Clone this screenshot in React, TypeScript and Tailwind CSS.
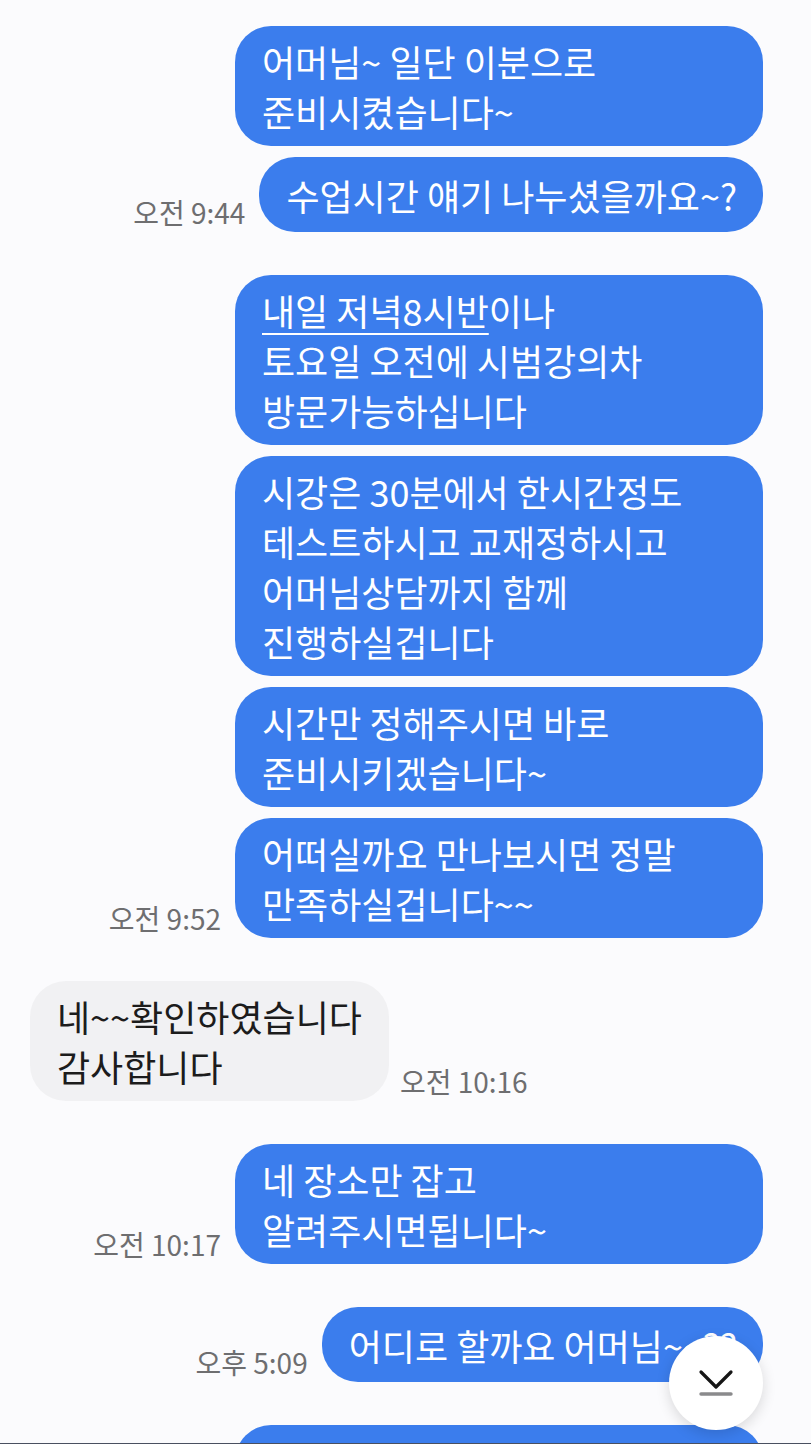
import React from "react";

type Msg = {
  lines: React.ReactNode[];
  wide?: boolean;
};

type Group = {
  from: "me" | "them";
  time: string;
  msgs: Msg[];
};

const groups: Group[] = [
  {
    from: "me",
    time: "오전 9:44",
    msgs: [
      { lines: ["어머님~ 일단 이분으로", "준비시켰습니다~"], wide: true },
      { lines: ["수업시간 얘기 나누셨을까요~?"] },
    ],
  },
  {
    from: "me",
    time: "오전 9:52",
    msgs: [
      {
        lines: [
          <>
            <span className="underline decoration-[2px] underline-offset-[7px]">내일 저녁8시반</span>이나
          </>,
          "토요일 오전에 시범강의차",
          "방문가능하십니다",
        ],
        wide: true,
      },
      {
        lines: ["시강은 30분에서 한시간정도", "테스트하시고 교재정하시고", "어머님상담까지 함께", "진행하실겁니다"],
        wide: true,
      },
      { lines: ["시간만 정해주시면 바로", "준비시키겠습니다~"], wide: true },
      { lines: ["어떠실까요 만나보시면 정말", "만족하실겁니다~~"], wide: true },
    ],
  },
  {
    from: "them",
    time: "오전 10:16",
    msgs: [{ lines: ["네~~확인하였습니다", "감사합니다"] }],
  },
  {
    from: "me",
    time: "오전 10:17",
    msgs: [{ lines: ["네 장소만 잡고", "알려주시면됩니다~"], wide: true }],
  },
  {
    from: "me",
    time: "오후 5:09",
    msgs: [{ lines: ["어디로 할까요 어머님~~??"] }],
  },
];

function Bubble({ msg, mine }: { msg: Msg; mine: boolean }) {
  return (
    <div
      className={`flex min-h-[75px] flex-col justify-center rounded-[36px] py-[10px] text-[36px] leading-[50px] ${
        mine ? "bg-[#3b7ded] text-white pl-[27px] pr-[26px]" : "bg-[#f1f1f3] text-[#1c1c1c] px-[27px]"
      } ${msg.wide ? "w-[528px]" : ""}`}
    >
      {msg.lines.map((l, i) => (
        <div key={i} className="whitespace-nowrap">
          {l}
        </div>
      ))}
    </div>
  );
}

function Time({ t }: { t: string }) {
  return (
    <span className="mb-[4px] whitespace-nowrap text-[28px] leading-[32px] text-[#6e6e70]">
      {t}
    </span>
  );
}

export default function App() {
  return (
    <div
      className="relative flex h-[1444px] w-[811px] flex-col overflow-hidden bg-[#fbfbfd]"
      style={{ fontFamily: '"Noto Sans CJK KR", "Noto Sans", sans-serif' }}
    >
      <div className="flex flex-1 flex-col gap-[43px] overflow-hidden pt-[26px]">
        {groups.map((g, gi) => {
          const mine = g.from === "me";
          return (
            <div
              key={gi}
              className={`flex flex-col gap-[11px] ${mine ? "items-end pr-[48px]" : "items-start pl-[30px]"}`}
            >
              {g.msgs.map((m, mi) => {
                const last = mi === g.msgs.length - 1;
                if (!last) return <Bubble key={mi} msg={m} mine={mine} />;
                return (
                  <div key={mi} className={`flex items-end ${mine ? "gap-[14px]" : "gap-[11px]"}`}>
                    {mine && <Time t={g.time} />}
                    <Bubble msg={m} mine={mine} />
                    {!mine && <Time t={g.time} />}
                  </div>
                );
              })}
            </div>
          );
        })}
        {/* next message, cut off by the screen edge */}
        <div className="flex shrink-0 justify-end pr-[48px]">
          <div className="h-[120px] w-[528px] rounded-[36px] bg-[#3b7ded]" />
        </div>
      </div>
      <div className="h-px shrink-0 bg-[#4a5060]" />

      {/* scroll to bottom */}
      <button className="absolute left-[669px] top-[1336px] flex h-[94px] w-[94px] items-center justify-center rounded-full bg-white shadow-[0_4px_14px_rgba(0,0,0,0.14)]">
        <svg width="36" height="28" viewBox="0 0 36 28" fill="none">
          <path d="M3 3 L18 18 L33 3" stroke="#161616" strokeWidth="3.2" strokeLinecap="round" strokeLinejoin="round" />
          <path d="M3 25 H33" stroke="#8a8a8c" strokeWidth="3.4" strokeLinecap="round" />
        </svg>
      </button>
    </div>
  );
}
